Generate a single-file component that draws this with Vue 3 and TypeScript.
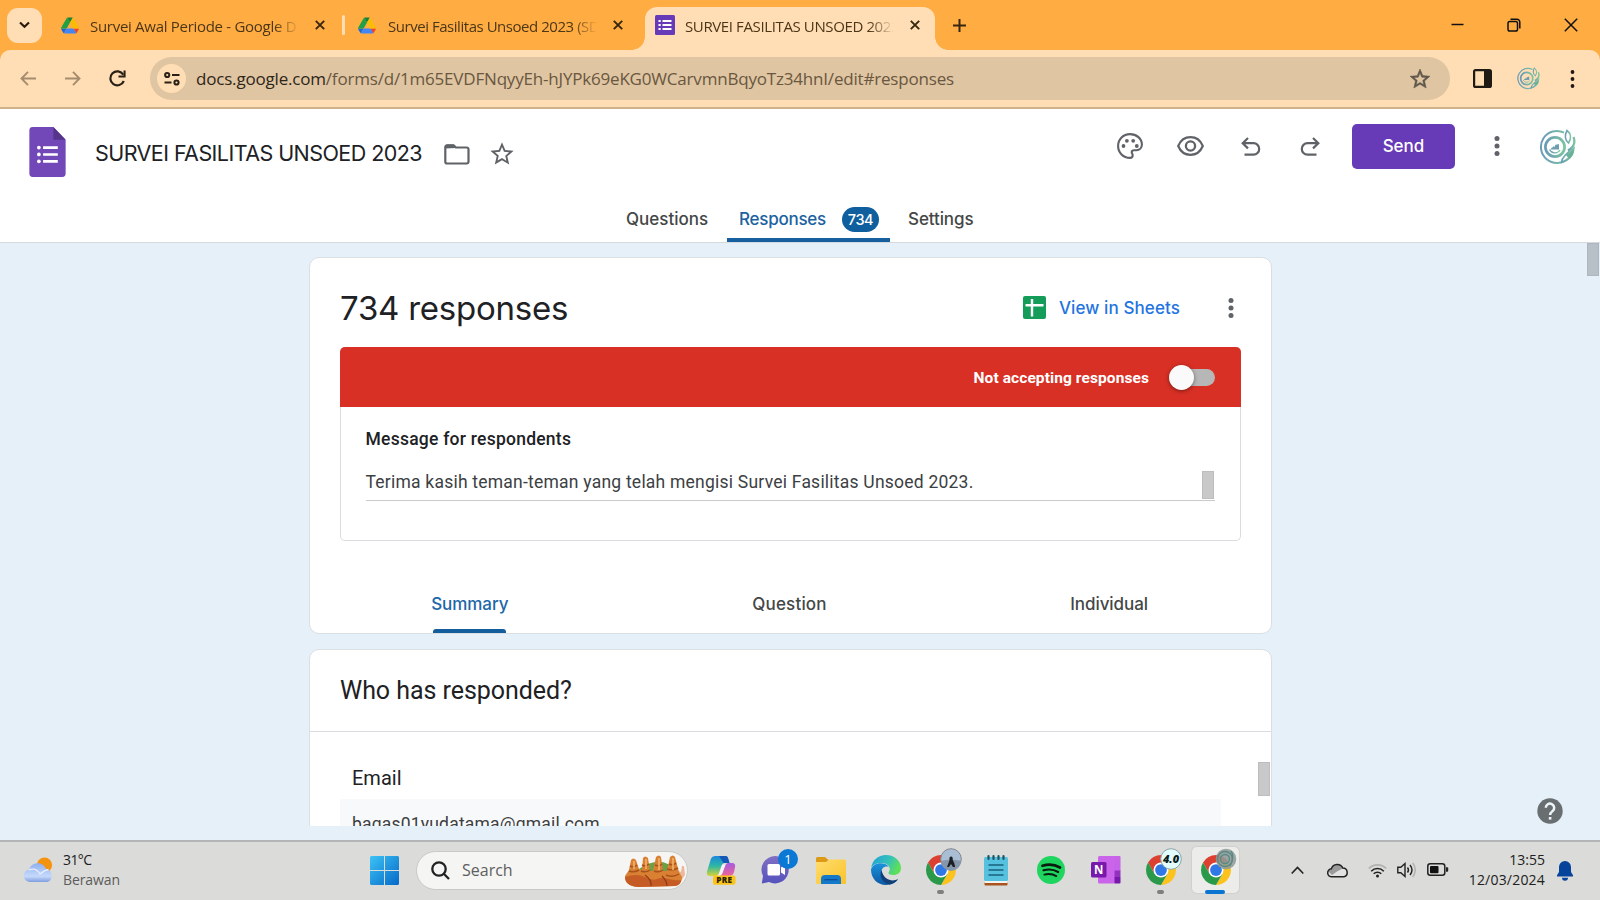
<script setup lang="ts">
interface BrowserTab {
  title: string
  kind: 'drive' | 'forms'
  active: boolean
  cls: string
}
interface TaskApp {
  id: string
  running?: boolean
  active?: boolean
}

const browserTabs: BrowserTab[] = [
  { title: 'Survei Awal Periode - Google D', kind: 'drive', active: false, cls: 'tab-a' },
  { title: 'Survei Fasilitas Unsoed 2023 (SD', kind: 'drive', active: false, cls: 'tab-b' },
  { title: 'SURVEI FASILITAS UNSOED 2023', kind: 'forms', active: true, cls: 'tab-c' },
]

const apps: TaskApp[] = [
  { id: 'copilot' },
  { id: 'chat' },
  { id: 'explorer' },
  { id: 'edge' },
  { id: 'chrome-photo', running: true },
  { id: 'notepad' },
  { id: 'spotify' },
  { id: 'onenote' },
  { id: 'chrome-four', running: true },
  { id: 'chrome-swirl', active: true },
]
</script>

<template>
  <div class="screen">
    <svg class="defs" width="0" height="0" aria-hidden="true">
      <defs>
        <linearGradient id="swirlGrad" x1="0" y1="0" x2="1" y2="0">
          <stop offset="0" stop-color="#6a9bb8" />
          <stop offset="1" stop-color="#7cc4a0" />
        </linearGradient>
        <linearGradient id="winGrad" gradientUnits="userSpaceOnUse" x1="0" y1="0" x2="29" y2="29">
          <stop offset="0" stop-color="#3cc3f5" />
          <stop offset="1" stop-color="#0569c8" />
        </linearGradient>
      </defs>
      <symbol id="drive" viewBox="0 0 87.3 78">
        <path d="M6.6 66.85l3.85 6.65c.8 1.4 1.95 2.5 3.3 3.3L27.5 53H0c0 1.55.4 3.1 1.2 4.5z" fill="#1f66d6" />
        <path d="M43.65 25L29.9 1.2c-1.35.8-2.5 1.9-3.3 3.3L1.2 48.5C.4 49.9 0 51.45 0 53h27.5z" fill="#22a045" />
        <path d="M73.55 76.8c1.35-.8 2.5-1.9 3.3-3.3l1.6-2.75 7.65-13.25c.8-1.4 1.2-2.95 1.2-4.5H59.8l5.85 11.5z" fill="#ea4335" />
        <path d="M43.65 25L57.4 1.2C56.05.4 54.5 0 52.9 0H34.4c-1.6 0-3.15.45-4.5 1.2z" fill="#188038" />
        <path d="M59.8 53H27.5L13.75 76.8c1.35.8 2.9 1.2 4.5 1.2h50.8c1.6 0 3.15-.45 4.5-1.2z" fill="#4285f4" />
        <path d="M73.4 26.5L60.7 4.5c-.8-1.4-1.95-2.5-3.3-3.3L43.65 25 59.8 53h27.45c0-1.55-.4-3.1-1.2-4.5z" fill="#fbbc04" />
      </symbol>
      <symbol id="chrome" viewBox="0 0 48 48">
        <path d="M3.22 12A24 24 0 0 1 44.78 12H24L13.61 30z" fill="#dc4030" />
        <path d="M44.78 12A24 24 0 0 1 24 48L34.39 30 24 12z" fill="#fcc31e" />
        <path d="M24 48A24 24 0 0 1 3.22 12L13.61 30H34.39z" fill="#2a9a4a" />
        <circle cx="24" cy="24" r="12" fill="#fff" />
        <circle cx="24" cy="24" r="9.4" fill="#2f78e6" />
      </symbol>
      <symbol id="swirl" viewBox="0 0 38 36">
        <g fill="none" stroke="url(#swirlGrad)">
          <path d="M26 3.600A16 16 0 1 0 30 29.500" stroke-width="2" />
          <circle cx="17" cy="18" r="9.600" stroke-width="2.700" />
          <path d="M11.500 20.500A6 6 0 0 0 22 21" stroke-width="1.200" />
          <path d="M29 1.500c4 3 4.500 8 1.500 12.500c-3.500-3-4-8-1.500-12.500z" stroke-width="1.600" />
          <path d="M35.500 8c2 5 .5 10-5.500 13.500" stroke-width="2.200" />
          <path d="M36 19c-.5 8-6 12.500-12.500 14.500c.5-5.500 5-9 12.500-14.500z" stroke-width="1.600" />
        </g>
        <path d="M12.500 20.500c1.500-3 2.500-1 3-3.500l1.500 1v-2l4-1v5.500z" fill="#6c9fb0" />
        <path d="M28 26l8-6-1 6-4 4z" fill="#69b199" />
      </symbol>
      <symbol id="star" viewBox="0 0 24 24">
        <path d="M22 9.24l-7.190-.62L12 2 9.190 8.630 2 9.240l5.460 4.730L5.820 21 12 17.270 18.180 21l-1.630-7.030L22 9.240zM12 15.400l-3.760 2.270 1-4.280-3.320-2.880 4.380-.38L12 6.100l1.710 4.040 4.380.38-3.320 2.880 1 4.280L12 15.400z" />
      </symbol>
      <symbol id="close" viewBox="0 0 10 10">
        <path d="M.8.8l8.400 8.400M9.200.8L.8 9.200" fill="none" stroke="#38260f" stroke-width="1.900" />
      </symbol>
      <symbol id="undo" viewBox="0 0 20 19">
        <path d="M7 1L1.700 6.200 7 11.400M2 6.200h10.500a5.700 5.700 0 0 1 0 11.400H3.500" fill="none" stroke="#5f6368" stroke-width="2.200" />
      </symbol>
      <symbol id="dots" viewBox="0 0 6 20">
        <circle cx="3" cy="2.500" r="2.500" /><circle cx="3" cy="10" r="2.500" /><circle cx="3" cy="17.500" r="2.500" />
      </symbol>
    </svg>

    <header class="browser">
      <div class="tabstrip">
        <button class="tab-search" aria-label="Search tabs">
          <svg width="11" height="8" viewBox="0 0 11 8"><path d="M1 1.500l4.500 4.300L10 1.500" fill="none" stroke="#2a1c0c" stroke-width="2.200" /></svg>
        </button>
        <template v-for="(tab, i) in browserTabs" :key="tab.title">
          <span v-if="i === 1" class="tab-sep"></span>
          <div class="tab" :class="[tab.cls, { active: tab.active }]">
            <svg v-if="tab.kind === 'drive'" class="fav" width="18" height="17"><use href="#drive" /></svg>
            <svg v-else class="fav" width="20" height="20" viewBox="0 0 20 20">
              <rect width="20" height="20" rx="1.500" fill="#673ab7" />
              <path d="M7.500 6h9M7.500 10h9M7.500 14h9" stroke="#fff" stroke-width="2.100" />
              <path d="M3.500 6h2.200M3.500 10h2.200M3.500 14h2.200" stroke="#fff" stroke-width="2.100" />
            </svg>
            <span class="tab-title">{{ tab.title }}</span>
            <svg class="tab-close" width="10" height="10"><use href="#close" /></svg>
          </div>
        </template>
        <svg class="new-tab" width="13" height="13" viewBox="0 0 13 13"><path d="M6.500 0v13M0 6.500h13" stroke="#38260f" stroke-width="2" /></svg>
        <div class="win-buttons">
          <svg width="13" height="14" viewBox="0 0 13 14"><path d="M.5 6.500h12" stroke="#111" stroke-width="1.500" /></svg>
          <svg width="14" height="14" viewBox="0 0 14 14" fill="none" stroke="#111" stroke-width="1.500">
            <rect x="1" y="3.500" width="9.500" height="9.500" rx="1.800" />
            <path d="M3.500 1.200h6.300a3 3 0 0 1 3 3v6.300" />
          </svg>
          <svg width="14" height="14" viewBox="0 0 14 14"><path d="M.8.8l12.400 12.400M13.200.8L.8 13.200" stroke="#111" stroke-width="1.500" /></svg>
        </div>
      </div>

      <div class="toolbar">
        <div class="nav-icons">
          <svg width="16" height="15" viewBox="0 0 16 15"><path d="M8 .8L1.500 7.500 8 14.200M1.500 7.500H16" fill="none" stroke="#a58c6e" stroke-width="1.900" /></svg>
          <svg width="16" height="15" viewBox="0 0 16 15"><path d="M8 .8l6.500 6.700L8 14.200M14.500 7.500H0" fill="none" stroke="#a58c6e" stroke-width="1.900" /></svg>
          <svg width="17" height="17" viewBox="0 0 17 17">
            <path d="M14.800 11A7 7 0 1 1 14.300 4.700" fill="none" stroke="#2a2016" stroke-width="2.200" />
            <path d="M16.600.5v7H9.500l0-2h5V.5z" fill="#2a2016" />
          </svg>
        </div>
        <div class="omnibox">
          <span class="site-info">
            <svg width="16" height="13" viewBox="0 0 16 13" fill="none" stroke="#2a2016" stroke-width="2">
              <circle cx="3.200" cy="3" r="2.100" /><path d="M8 3h7.500M.5 10.500h7" /><circle cx="12.500" cy="10.500" r="2.100" />
            </svg>
          </span>
          <span class="url"><b>docs.google.com</b>/forms/d/1m65EVDFNqyyEh-hJYPk69eKG0WCarvmnBqyoTz34hnI/edit#responses</span>
          <svg class="bookmark" width="24" height="24"><use href="#star" /></svg>
        </div>
        <svg class="side-panel" width="19" height="19" viewBox="0 0 19 19">
          <rect x="1.100" y="1.100" width="16.800" height="16.800" rx="1.500" fill="none" stroke="#201a14" stroke-width="2.200" />
          <rect x="11" y="1" width="7" height="17" fill="#201a14" />
        </svg>
        <svg class="mini-avatar" width="24" height="23"><use href="#swirl" /></svg>
        <svg class="menu-dots" width="5" height="18" viewBox="0 0 5 18" fill="#201a14"><circle cx="2.500" cy="2" r="1.900" /><circle cx="2.500" cy="9" r="1.900" /><circle cx="2.500" cy="16" r="1.900" /></svg>
      </div>
    </header>

    <section class="form-header">
      <div class="form-top">
        <svg class="forms-logo" width="37" height="50" viewBox="0 0 37 51">
          <path d="M3.500 0H24.500L37 13v34.500a3.500 3.500 0 0 1-3.500 3.500h-30A3.500 3.500 0 0 1 0 47.500v-44A3.500 3.500 0 0 1 3.500 0z" fill="#7248b9" />
          <path d="M24.500 0L37 13H24.500z" fill="#55358b" />
          <path d="M14 21h15M14 28h15M14 35h15" stroke="#fff" stroke-width="2.700" />
          <circle cx="9.700" cy="21" r="1.900" fill="#fff" /><circle cx="9.700" cy="28" r="1.900" fill="#fff" /><circle cx="9.700" cy="35" r="1.900" fill="#fff" />
        </svg>
        <h1 class="form-title">SURVEI FASILITAS UNSOED 2023</h1>
        <svg class="folder" width="26" height="21" viewBox="0 0 26 21">
          <path d="M1.300 3.200v14.600a1.700 1.700 0 0 0 1.700 1.700h19.800a1.700 1.700 0 0 0 1.700-1.700V5.200a1.700 1.700 0 0 0-1.700-1.700H12L9.600 1.300H3a1.700 1.700 0 0 0-1.700 1.900z" fill="none" stroke="#5f6368" stroke-width="2.200" />
          <path d="M1 4.500V2l2-1.500h6.500l3 3.500z" fill="#5f6368" />
        </svg>
        <svg class="title-star" width="28" height="28"><use href="#star" /></svg>

        <div class="actions">
          <svg width="26" height="26" viewBox="0 0 26 26">
            <path d="M13 1.100C6.300 1.100 1.100 6.300 1.100 13S6.300 24.900 13 24.900c1.700 0 2.700-1.200 2.700-2.600 0-1.500-1-1.900-1-3.100 0-1.300 1-2 2.300-2h2.400c3.200 0 5.500-2.400 5.500-5.600C24.900 5.600 19.600 1.100 13 1.100z" fill="none" stroke="#5f6368" stroke-width="2.100" />
            <g fill="#5f6368"><circle cx="6.500" cy="13" r="1.900" /><circle cx="9.900" cy="7.800" r="1.900" /><circle cx="16.200" cy="7.800" r="1.900" /><circle cx="19.800" cy="13" r="1.900" /></g>
          </svg>
          <svg width="27" height="20" viewBox="0 0 27 20" fill="none" stroke="#5f6368">
            <path d="M1.200 10C3.500 4.500 8 1.200 13.500 1.200S23.500 4.500 25.800 10c-2.300 5.500-6.800 8.800-12.300 8.800S3.500 15.500 1.200 10z" stroke-width="2.200" />
            <circle cx="13.500" cy="10" r="4.600" stroke-width="2.300" />
          </svg>
          <svg width="20" height="19"><use href="#undo" /></svg>
          <svg class="redo" width="20" height="19"><use href="#undo" /></svg>
          <button class="send">Send</button>
          <svg class="head-dots" width="6" height="20"><use href="#dots" /></svg>
          <svg class="avatar" width="38" height="36"><use href="#swirl" /></svg>
        </div>
      </div>
      <nav class="form-nav">
        <a class="n-q">Questions</a>
        <a class="current"><span class="n-r">Responses</span><span class="count">734</span></a>
        <a class="n-s">Settings</a>
      </nav>
    </section>

    <main class="workspace">
      <div class="scroll-area">
        <article class="card">
          <div class="card-head">
            <h2>734 responses</h2>
            <svg width="23" height="23" viewBox="0 0 23 23">
              <rect width="23" height="23" rx="2" fill="#149d58" />
              <path d="M9 3v17.500M2.500 9.200h18" stroke="#fff" stroke-width="2.400" />
            </svg>
            <a class="sheets">View in Sheets</a>
            <svg class="card-dots" width="6" height="20"><use href="#dots" /></svg>
          </div>
          <div class="panel">
            <div class="banner">
              <span>Not accepting responses</span>
              <i class="switch"></i>
            </div>
            <div class="message">
              <label>Message for respondents</label>
              <div class="field"><p>Terima kasih teman-teman yang telah mengisi Survei Fasilitas Unsoed 2023.</p><i class="field-thumb"></i></div>
            </div>
          </div>
          <nav class="card-tabs">
            <a class="selected">Summary</a>
            <a class="ct-q">Question</a>
            <a>Individual</a>
          </nav>
        </article>

        <article class="card second">
          <h3>Who has responded?</h3>
          <div class="list">
            <h4>Email</h4>
            <p class="row">bagas01yudatama@gmail.com</p>
            <i class="list-thumb"></i>
          </div>
        </article>
      </div>
      <i class="page-thumb"></i>
      <svg class="help" width="26" height="26" viewBox="0 0 26 26">
        <circle cx="13" cy="13" r="12.700" fill="#696e70" />
        <path d="M8.800 9.800a4.200 4.200 0 1 1 6.800 3.300c-1.500 1.200-2.500 1.800-2.500 3.900" fill="none" stroke="#eef5fa" stroke-width="2.500" />
        <rect x="11.800" y="19" width="2.600" height="2.600" fill="#eef5fa" />
      </svg>
    </main>

    <footer class="taskbar">
      <div class="weather">
        <svg width="31" height="26" viewBox="0 0 31 26">
          <defs>
            <linearGradient id="cloudGrad" x1="0" y1="0" x2="0" y2="1"><stop offset="0" stop-color="#8fb0f0" /><stop offset=".7" stop-color="#c6d9fb" /><stop offset="1" stop-color="#7f9ee0" /></linearGradient>
          </defs>
          <circle cx="21.500" cy="8" r="7.600" fill="#f4930f" />
          <path d="M6.500 25a6.300 6.300 0 0 1-.5-12.500 9 9 0 0 1 17-.5 6.800 6.800 0 0 1 1.500 13z" fill="url(#cloudGrad)" />
          <path d="M6 13q7-3 11 4 5-4 8.500-4.500" fill="none" stroke="#e3edff" stroke-width="1.400" />
        </svg>
        <div class="weather-text"><strong>31°C</strong><span>Berawan</span></div>
      </div>

      <div class="dock">
        <svg width="29" height="29" viewBox="0 0 29 29" fill="url(#winGrad)">
          <path d="M1 0h13v14H0V1z" /><path d="M15 0h13l1 1v13H15z" /><path d="M0 15h14v14H1l-1-1z" /><path d="M15 15h14v13l-1 1H15z" />
        </svg>
        <div class="search">
          <svg width="19" height="19" viewBox="0 0 19 19" fill="none" stroke="#222" stroke-width="2.300"><circle cx="8" cy="8" r="6.700" /><path d="M12.800 12.800l5.200 5.200" /></svg>
          <span>Search</span>
          <svg class="food" width="64" height="31" viewBox="0 0 64 31">
            <path d="M12 17q8-9 20-11t21 9z" fill="#6f9f45" />
            <path d="M54 14l4 2 1-6 2 0 1 9-6 9z" fill="#efb79a" />
            <path d="M2 20L6 14l2-10q2-3 5 0l3 9 3 1 1-12q2-3 5 0l2 13 3 0 3-14q3-3 5 0l2 14 4 0 3-14q3-3 5 0l4 15 3 5q0 7-6 9l-36 1Q1 30 2 20z" fill="#d98033" />
            <path d="M2 21q12-4 20 0t12 2 12 0 12 1q0 5-6 6l-37 1Q2 30 2 21z" fill="#c65c25" />
            <path d="M7 10q4 2 7-1M6 15q5 2 10-1M19 9q4 2 7-1M18 15q5 2 9-1M32 9q4 2 7-1M31 15q5 2 9-1M46 8q4 2 7-1M44 13q6 2 11-1M43 19q7 3 13-1" fill="none" stroke="#a8521c" stroke-width="1.500" />
            <path d="M11 5v8M23 3v10M36 2v12M50 2v12" stroke="#f2b56d" stroke-width="1.500" />
            <path d="M22 19q7 5 6 11M39 20q5 5 5 10" fill="none" stroke="#8e3a18" stroke-width="1.200" />
          </svg>
        </div>

        <div class="apps">
          <div v-for="app in apps" :key="app.id" class="app" :class="{ running: app.running, focused: app.active }">
            <svg v-if="app.id === 'copilot'" width="30" height="29" viewBox="0 0 30 29">
              <defs>
                <linearGradient id="cpA" x1="0" y1="0" x2="0" y2="1"><stop offset="0" stop-color="#1c87dc" /><stop offset=".5" stop-color="#2cb7a4" /><stop offset="1" stop-color="#d9d334" /></linearGradient>
                <linearGradient id="cpB" x1="0" y1="0" x2="0" y2="1"><stop offset="0" stop-color="#a75be0" /><stop offset="1" stop-color="#ee6597" /></linearGradient>
              </defs>
              <path d="M5 2.500Q6 0 9 0h10q2.500 0 3 2l1.500 5h-5q-2 0-3 2.500L13 17q-1 3-4 3H4.500Q0 20 1 15.500z" fill="url(#cpA)" />
              <path d="M13 0h6.500q2 0 2.500 2l1.500 5h-6z" fill="#1558b8" />
              <path d="M19 10q1-3 3-3h4q4 0 3 4.500L28 16q-1 4-5 4H12.500q2.500-1 3.500-3z" fill="url(#cpB)" />
              <path d="M19.500 8.500h-2q-1.500 0-2 2L13 18q-.5 1.500-1.500 2h2.500q1.500 0 2.500-3z" fill="#f4f2fa" />
              <rect x="7" y="19.500" width="22.500" height="9.300" rx="2" fill="#fcc419" />
              <text x="18.300" y="27" text-anchor="middle" class="pre">PRE</text>
            </svg>

            <template v-else-if="app.id === 'chat'">
              <svg width="29" height="28" viewBox="0 0 29 28">
                <defs><linearGradient id="chatG" x1="0" y1="0" x2="0" y2="1"><stop offset="0" stop-color="#8070c4" /><stop offset="1" stop-color="#5552bd" /></linearGradient></defs>
                <path d="M14.500 0A13.700 13.700 0 1 1 8 26L.8 27.500 2 20A13.700 13.700 0 0 1 14.500 0z" fill="url(#chatG)" />
                <rect x="6.500" y="8" width="12.500" height="11.500" rx="1.500" fill="#fff" /><path d="M20 11.500l4-2.500v10l-4-2.500z" fill="#fff" />
              </svg>
              <span class="notice">1</span>
            </template>

            <svg v-else-if="app.id === 'explorer'" width="30" height="27" viewBox="0 0 30 27">
              <defs><linearGradient id="folG" x1="0" y1="0" x2="1" y2="1"><stop offset="0" stop-color="#ffdd70" /><stop offset="1" stop-color="#fac229" /></linearGradient></defs>
              <path d="M0 1.500Q0 0 1.500 0H9l3.500 3H29v5H0z" fill="#dc9a16" />
              <path d="M0 5h10l3-2.500h15.500q1.500 0 1.500 1.500v22q0 1-1.500 1h-27Q0 27 0 25.500z" fill="url(#folG)" />
              <path d="M5 27v-5q0-4 4-4h12q4 0 4 4v5z" fill="#1479c9" /><path d="M8.500 22.700h13" stroke="#0a4f9a" stroke-width="1.300" />
            </svg>

            <svg v-else-if="app.id === 'edge'" width="30" height="30" viewBox="0 0 30 30">
              <defs>
                <linearGradient id="edA" x1="0" y1="0" x2="1" y2=".4"><stop offset="0" stop-color="#1f9fdc" /><stop offset=".6" stop-color="#35c1b8" /><stop offset="1" stop-color="#5ce05a" /></linearGradient>
                <linearGradient id="edB" x1="0" y1="0" x2="0" y2="1"><stop offset="0" stop-color="#1b93dc" /><stop offset="1" stop-color="#0c59a4" /></linearGradient>
              </defs>
              <path d="M.2 13C1.200 5 7.500 0 15 0c8.500 0 15 6 15 13 0 4.500-3.500 7-7.500 7-3 0-5-1-5-2s1.300-1.800 1.300-4c0-3.500-3.800-6-8.300-6C5.500 8 1.500 10 .2 13z" fill="url(#edA)" />
              <path d="M0 14.500C1 10.500 5 8.200 9.500 8.200c4 0 7 1.600 8.500 3.800-4-1.500-7.500.8-7.500 5 0 5.500 5 9.500 11 9 2.500-.2 4.500-1.200 5.500-1.700C24.500 28 20 30 15 30 6.500 30 0 23.500 0 14.500z" fill="url(#edB)" />
              <path d="M10.500 15c-3 7 1.500 13 8 14.500 3.800-.8 6.800-2.800 8.500-5.200-6 2.700-14.500.7-16.500-9.300z" fill="#123f78" />
            </svg>

            <svg v-else-if="app.id === 'notepad'" width="24" height="31" viewBox="0 0 24 31">
              <rect x=".5" y="26.500" width="23" height="4" rx="1" fill="#a9541e" /><rect x=".5" y="25" width="23" height="3" fill="#f3f3f0" />
              <rect x="0" y="2" width="24" height="24" rx="1.500" fill="#56c1de" />
              <path d="M4.500 10h15M4.500 15h15M4.500 20h15" stroke="#16627e" stroke-width="1.500" />
              <path d="M4.500 1v3M9.500 1v3M14.500 1v3M19.500 1v3" stroke="#1b5566" stroke-width="2.200" stroke-linecap="round" />
            </svg>

            <svg v-else-if="app.id === 'spotify'" width="28" height="28" viewBox="0 0 28 28">
              <circle cx="14" cy="14" r="14" fill="#1ed55f" />
              <g fill="none" stroke="#0a1c10" stroke-linecap="round"><path d="M5.500 9.800c6-1.800 12.500-1.200 17.500 1.700" stroke-width="2.700" /><path d="M6.500 14.300c5-1.400 10.500-.8 14.700 1.700" stroke-width="2.200" /><path d="M7.300 18.600c4.200-1 8.500-.6 12 1.500" stroke-width="1.900" /></g>
            </svg>

            <svg v-else-if="app.id === 'onenote'" width="30" height="28" viewBox="0 0 30 28">
              <rect x="7" y="0" width="17" height="27.500" rx="1.500" fill="#ca64ea" /><path d="M23 0h5.500q1 0 1 1v14H23z" fill="#c763e8" />
              <rect x="23.500" y="14.500" width="6" height="6.500" fill="#9332bf" /><path d="M23.500 21h6v5.500q0 1-1 1h-5z" fill="#7719aa" />
              <rect x="0" y="6" width="15.500" height="15.500" rx="1.500" fill="#7719aa" />
              <text x="7.700" y="18" text-anchor="middle" class="onen">N</text>
            </svg>

            <template v-else>
              <svg width="30" height="30"><use href="#chrome" /></svg>
              <svg class="profile" width="22" height="22" viewBox="0 0 22 22">
                <template v-if="app.id === 'chrome-photo'">
                  <circle cx="11" cy="11" r="10.300" fill="#a9bdd4" stroke="#808890" />
                  <path d="M1 13q10-3 20 0a10 10 0 0 1-20 0z" fill="#8797ab" />
                  <path d="M11 8.500c1.500 0 2 1.500 1.700 3.500l1.500 3 1 4H13l-2-3-2 3H7l1.500-4 1-3q-.5-3.500 1.500-3.500z" fill="#1c2025" />
                </template>
                <template v-else-if="app.id === 'chrome-four'">
                  <circle cx="11" cy="11" r="10.300" fill="#e2fbfb" stroke="#8ea6a6" />
                  <text x="11" y="15" text-anchor="middle" class="four">4.0</text>
                </template>
                <template v-else>
                  <circle cx="11" cy="11" r="10.300" fill="#8f9b96" opacity=".88" />
                  <g fill="none" stroke="#588885" stroke-width="1.300"><circle cx="10" cy="11" r="7.500" /><circle cx="10" cy="11" r="4.500" /><path d="M16 3q4 5-1 15" /></g>
                </template>
              </svg>
            </template>
          </div>
        </div>
      </div>

      <div class="tray">
        <svg class="t-up" width="13" height="9" viewBox="0 0 13 9"><path d="M.7 7.500l5.800-6 5.800 6" fill="none" stroke="#222" stroke-width="1.600" /></svg>
        <svg class="t-cloud" width="22" height="15" viewBox="0 0 22 15">
          <path d="M5 13.800a4 4 0 0 1-.6-8A6.200 6.200 0 0 1 15.800 5 4.500 4.500 0 0 1 17 13.800z" fill="#e2e2e2" />
          <path d="M1.500 8.500Q3 5.500 5 5.700 7 1 11 1.200q4 .3 5.200 4L10 8.500 5 12z" fill="#9a9a9a" />
          <path d="M5 13.800a4 4 0 0 1-.6-8A6.200 6.200 0 0 1 15.800 5 4.500 4.500 0 0 1 17 13.800z" fill="none" stroke="#222" stroke-width="1.500" />
        </svg>
        <svg class="t-wifi" width="19" height="15" viewBox="0 0 19 15" fill="none" stroke-width="1.600">
          <path d="M.8 5.500a12.200 12.200 0 0 1 17.400 0" stroke="#b1b1b0" /><path d="M3.200 8.200a8.800 8.800 0 0 1 12.600 0M5.700 10.800a5.300 5.300 0 0 1 7.600 0" stroke="#222" /><circle cx="9.500" cy="13" r="1.500" fill="#222" />
        </svg>
        <svg class="t-sound" width="20" height="16" viewBox="0 0 20 16" fill="none" stroke="#222" stroke-width="1.400">
          <path d="M.8 5.200h3L8 1.500v13l-4.200-3.700h-3z" /><path d="M10.500 5.500q2 2.500 0 5M13 3q4 5 0 10" /><path d="M15.800 1q5 7 0 14" stroke="#b1b1b0" />
        </svg>
        <svg class="t-batt" width="22" height="14" viewBox="0 0 22 14">
          <rect x=".8" y=".8" width="17" height="11.500" rx="2.500" fill="none" stroke="#222" stroke-width="1.500" /><rect x="3" y="3" width="8.500" height="7.200" rx="1" fill="#111" /><path d="M19 4.200h1.200q1 0 1 1v2.600q0 1-1 1H19z" fill="#222" />
        </svg>
        <div class="clock"><span>13:55</span><span class="date">12/03/2024</span></div>
        <svg class="t-bell" width="16" height="19" viewBox="0 0 16 19" fill="#06439a"><path d="M8 0a6 6 0 0 1 6 6v5l2 3.200V15.500H0v-1.300L2 11V6a6 6 0 0 1 6-6zM5 16.700h6a3 3 0 0 1-6 0z" /></svg>
      </div>
    </footer>
  </div>
</template>

<style>
html,
body {
  margin: 0;
  overflow: hidden;
}
</style>

<style scoped>
.screen {
  width: 1600px;
  height: 900px;
  display: flex;
  flex-direction: column;
  overflow: hidden;
  background: #fff;
  color: #202124;
  font-family: Inter, "Liberation Sans", sans-serif;
}
.screen * {
  box-sizing: border-box;
}
.defs {
  position: absolute;
}
svg {
  display: block;
  flex: none;
  overflow: visible;
}
h1, h2, h3, h4, p {
  margin: 0;
  font-weight: 400;
}
button {
  border: 0;
  padding: 0;
  font: inherit;
}

/* Browser chrome */
.browser {
  flex: none;
  height: 109px;
  background: #ffac42;
  font-family: "Open Sans", "Noto Sans", sans-serif;
}
.tabstrip {
  height: 50px;
  display: flex;
  align-items: center;
}
.tab-search {
  width: 35px;
  height: 35px;
  margin-left: 7px;
  border-radius: 11px;
  background: #ffdeb5;
  display: flex;
  align-items: center;
  justify-content: center;
}
.tab {
  height: 50px;
  display: flex;
  align-items: center;
  color: #4c3618;
  font-size: 15px;
}
.tab-title {
  flex: none;
  width: 215px;
  white-space: nowrap;
  line-height: 30px;
  padding-top: 1px;
  mask-image: linear-gradient(to right, #000 184px, transparent 209px);
}
.tab-close {
  margin-left: auto;
}
.tab-a {
  width: 264px;
  margin-left: 19px;
}
.tab-a .tab-title {
  margin-left: 11px;
  letter-spacing: -0.29px;
}
.tab-sep {
  width: 3px;
  height: 20px;
  margin: 0 13px 0 17px;
  border-radius: 2px;
  background: #ffdeb5;
}
.tab-b {
  width: 265px;
}
.tab-b .tab-title {
  margin-left: 12px;
  letter-spacing: -0.46px;
}
.tab-c {
  position: relative;
  width: 290px;
  height: 43px;
  margin: 7px 0 0 22px;
  padding: 0 15px 7px 10px;
  border-radius: 12px 12px 0 0;
  background: #ffdeb5;
}
.tab-c::before,
.tab-c::after {
  content: "";
  position: absolute;
  bottom: 0;
  width: 13px;
  height: 13px;
}
.tab-c::before {
  left: -13px;
  background: radial-gradient(circle at 0 0, transparent 12.500px, #ffdeb5 13px);
}
.tab-c::after {
  right: -13px;
  background: radial-gradient(circle at 100% 0, transparent 12.500px, #ffdeb5 13px);
}
.tab-c .tab-title {
  margin-left: 10px;
  letter-spacing: -0.38px;
}
.new-tab {
  margin-left: 18px;
}
.win-buttons {
  display: flex;
  gap: 43px;
  margin: 0 22px 0 auto;
}
.toolbar {
  height: 59px;
  display: flex;
  align-items: center;
  padding: 0 25px 0 20px;
  border-bottom: 2px solid #cfb18b;
  border-radius: 10px 10px 0 0;
  background: #ffdeb5;
}
.nav-icons {
  display: flex;
  align-items: center;
  gap: 28.500px;
  width: 130px;
}
.omnibox {
  width: 1300px;
  height: 43px;
  display: flex;
  align-items: center;
  padding: 0 18px 0 7px;
  border-radius: 22px;
  background: #dfc5a2;
}
.site-info {
  width: 29px;
  height: 29px;
  border-radius: 50%;
  background: #ffdeb5;
  display: flex;
  align-items: center;
  justify-content: center;
}
.url {
  margin-left: 10px;
  color: #69573f;
  font-size: 17px;
  letter-spacing: -0.19px;
  white-space: nowrap;
}
.url b {
  color: #2f2619;
  font-weight: 400;
}
.bookmark {
  margin-left: auto;
  fill: #5f574b;
  stroke: #5f574b;
  stroke-width: 0.5;
}
.side-panel {
  margin-left: 23px;
}
.mini-avatar {
  margin-left: 24px;
}
.menu-dots {
  margin-left: auto;
}

/* Form header */
.form-header {
  flex: none;
  height: 134px;
  border-bottom: 1px solid #d5dade;
}
.form-top {
  height: 86px;
  display: flex;
  align-items: center;
  padding: 0 24px 0 29px;
}
.forms-logo {
  margin-top: -1px;
}
.form-title {
  width: 326px;
  margin-left: 29px;
  padding-top: 1px;
  font-size: 21.500px;
  line-height: 30px;
  letter-spacing: -0.56px;
  white-space: nowrap;
  color: #202124;
}
.folder {
  margin: 4px 0 0 23px;
}
.title-star {
  margin: 4px 0 0 18px;
  fill: #5f6368;
}
.actions {
  display: flex;
  align-items: center;
  margin: -12px 0 0 auto;
}
.actions svg:nth-child(2) {
  margin-left: 34px;
}
.actions svg:nth-child(3) {
  margin-left: 37px;
}
.actions .redo {
  margin-left: 39px;
  transform: scaleX(-1);
}
.send {
  width: 103px;
  height: 45px;
  margin-left: 32px;
  border-radius: 5px;
  background: #673ab7;
  color: #fff;
  font-size: 17px;
  font-weight: 500;
}
.head-dots {
  margin-left: 39px;
  fill: #5f6368;
}
.avatar {
  margin: 2px 0 0 38px;
}
.form-nav {
  height: 47px;
  display: flex;
  gap: 6px;
  padding-left: 614px;
  font-size: 17px;
  font-weight: 500;
  color: #444746;
}
.form-nav a {
  height: 47px;
  display: flex;
  align-items: center;
  padding: 1px 12px 0;
}
.form-nav .current {
  width: 163px;
  justify-content: space-between;
  color: #1c62a0;
  border-bottom: 4px solid #1660a0;
  border-radius: 3px 3px 0 0;
  padding: 5px 11px 0 12px;
}
.n-q {
  width: 107px;
}
.n-r {
  letter-spacing: -0.25px;
}
.n-s {
  letter-spacing: -0.1px;
}
.count {
  width: 37px;
  height: 25px;
  border-radius: 13px;
  background: #0f5e9e;
  color: #fff;
  font-size: 14.500px;
  line-height: 25px;
  letter-spacing: -0.4px;
  text-align: center;
}

/* Responses */
.workspace {
  position: relative;
  flex: 1;
  background: #e5f0f9;
}
.scroll-area {
  height: 583px;
  padding: 14px 0 0 309px;
  overflow: hidden;
}
.card {
  width: 963px;
  height: 377px;
  border: 1px solid #dadfe4;
  border-radius: 10px;
  background: #fff;
}
.card-head {
  height: 89px;
  display: flex;
  align-items: center;
  padding: 10px 37px 0 30px;
}
.card-head h2 {
  margin: 0 auto 0 0;
  font-size: 33px;
  line-height: 44px;
  letter-spacing: -0.24px;
  white-space: nowrap;
}
.sheets {
  margin-left: 13px;
  color: #2374e1;
  font-size: 17px;
  font-weight: 500;
  letter-spacing: 0.1px;
}
.card-dots {
  margin-left: 48px;
  fill: #5f6368;
}
.panel {
  width: 901px;
  height: 194px;
  margin-left: 30px;
  border: 1px solid #dadce0;
  border-top: 0;
  border-radius: 5px;
}
.banner {
  height: 60px;
  margin: 0 -1px;
  display: flex;
  align-items: center;
  justify-content: flex-end;
  padding: 2px 26px 0 0;
  border-radius: 5px 5px 0 0;
  background: #d93025;
  color: #fff;
  font: 700 15.500px Roboto, sans-serif;
  letter-spacing: 0.09px;
}
.switch {
  position: relative;
  width: 46px;
  height: 17px;
  margin: -1px 0 0 20px;
}
.switch::before {
  content: "";
  position: absolute;
  inset: 0 0 0 8px;
  border-radius: 9px;
  background: #b7b7b7;
}
.switch::after {
  content: "";
  position: absolute;
  left: 0;
  top: -4px;
  width: 25px;
  height: 25px;
  border-radius: 50%;
  background: #fafafa;
  box-shadow: 0 1px 4px rgba(0, 0, 0, 0.45);
}
.message {
  padding: 22px 25px 0 24.500px;
  font-family: Roboto, sans-serif;
  font-size: 17.500px;
}
.message label {
  display: block;
  line-height: 21px;
  font-weight: 500;
  letter-spacing: 0.24px;
}
.field {
  display: flex;
  justify-content: space-between;
  height: 51px;
  border-bottom: 1px solid #c9cacc;
  color: #3c4043;
}
.field p {
  padding-top: 21px;
  line-height: 22px;
  letter-spacing: 0.225px;
}
.field-thumb {
  width: 12px;
  height: 28px;
  margin: 21px 1px 0 0;
  border: 1px solid #bdbdbd;
  background: #c9c9c9;
}
.card-tabs {
  height: 92px;
  margin-right: 2px;
  display: grid;
  grid-template-columns: repeat(3, 1fr);
  color: #444746;
  font-size: 17px;
  font-weight: 500;
  text-align: center;
}
.card-tabs a {
  display: flex;
  flex-direction: column;
  align-items: center;
  padding-top: 53px;
  line-height: 20px;
  letter-spacing: -0.05px;
}
.card-tabs .ct-q {
  letter-spacing: 0.19px;
}
.card-tabs .selected {
  color: #1c67a8;
}
.selected::after {
  content: "";
  width: 73px;
  height: 4px;
  margin-top: 15px;
  border-radius: 3px 3px 0 0;
  background: #135d9c;
}
.second {
  height: 420px;
  margin-top: 15px;
  font-family: Roboto, sans-serif;
}
.second h3 {
  height: 82px;
  padding-left: 30px;
  border-bottom: 1px solid #dadce0;
  font-size: 25px;
  line-height: 81px;
  letter-spacing: -0.05px;
}
.list {
  position: relative;
  padding: 33px 50px 0 30px;
}
.list h4 {
  height: 34px;
  padding-left: 12px;
  font-size: 20px;
  line-height: 26px;
}
.row {
  height: 52px;
  padding-left: 12px;
  background: #f7f9fb;
  color: #3c4043;
  font-size: 17.500px;
  line-height: 50px;
  letter-spacing: 0.2px;
}
.list-thumb {
  position: absolute;
  top: 30px;
  right: 1px;
  width: 12px;
  height: 34px;
  border: 1px solid #bdbdbd;
  background: #c9c9c9;
}
.page-thumb {
  position: absolute;
  top: 0;
  right: 1px;
  width: 12px;
  height: 33px;
  border: 1px solid #adb6be;
  background: #b7bfc7;
}
.help {
  position: absolute;
  top: 555px;
  right: 37px;
}

/* Taskbar */
.taskbar {
  flex: none;
  height: 60px;
  display: flex;
  align-items: center;
  padding: 0 27px 2px 23px;
  border-top: 2px solid #b3b4b6;
  background: #dbdbd9;
  font-family: "Open Sans", "Noto Sans", sans-serif;
  font-size: 14px;
  color: #202020;
}
.weather {
  width: 347px;
  display: flex;
  align-items: center;
  gap: 9px;
}
.weather-text {
  display: flex;
  flex-direction: column;
  line-height: 20px;
}
.weather strong {
  font-weight: 400;
  letter-spacing: -0.6px;
}
.weather span {
  color: #5c5c5c;
  letter-spacing: -0.1px;
}
.dock {
  display: flex;
  align-items: center;
}
.search {
  width: 272px;
  height: 39px;
  margin: 0 5px 0 17px;
  display: flex;
  align-items: center;
  padding-left: 14px;
  border: 1px solid #c9c9c8;
  border-radius: 20px;
  background: #f5f5f4;
  color: #5e5e5e;
  font-size: 16px;
}
.search span {
  margin-left: 12px;
}
.food {
  margin: 2px 0 0 auto;
}
.apps {
  display: flex;
}
.app {
  position: relative;
  width: 55px;
  height: 58px;
  display: flex;
  align-items: center;
  justify-content: center;
}
.app > svg,
.app > .notice {
  z-index: 1;
}
.focused::before {
  content: "";
  position: absolute;
  inset: 6px 4px 6px 4px;
  border-radius: 5px;
  background: #ececea;
  box-shadow: 0 0 1px 1px #d0d0ce;
}
.running::after,
.focused::after {
  content: "";
  position: absolute;
  bottom: 5px;
  left: 24px;
  width: 7px;
  height: 4px;
  border-radius: 2px;
  background: #7f7f7e;
}
.focused::after {
  left: 17px;
  width: 20px;
  background: #0a74d1;
}
.profile {
  position: absolute;
  top: 7px;
  right: 6px;
}
.notice {
  position: absolute;
  top: 8px;
  right: 5px;
  width: 20px;
  height: 20px;
  border-radius: 50%;
  background: #0a78d4;
  color: #fff;
  font-size: 13px;
  line-height: 20px;
  text-align: center;
}
.pre {
  font: 800 8.200px "Open Sans", sans-serif;
  letter-spacing: 0.3px;
  fill: #2a2200;
}
.onen {
  font: 700 11.500px "Open Sans", sans-serif;
  fill: #fff;
}
.four {
  font: italic 800 11px "Open Sans", sans-serif;
  fill: #0b1a1a;
}
.tray {
  display: flex;
  align-items: center;
  margin-left: auto;
}
.t-cloud {
  margin-left: 23px;
}
.t-wifi {
  margin-left: 19px;
}
.t-sound {
  margin-left: 10px;
}
.t-batt {
  margin-left: 10px;
}
.clock {
  width: 77px;
  margin: 0 12px 0 19px;
  display: flex;
  flex-direction: column;
  align-items: flex-end;
  line-height: 20px;
}
.date {
  letter-spacing: 0.2px;
}
</style>
